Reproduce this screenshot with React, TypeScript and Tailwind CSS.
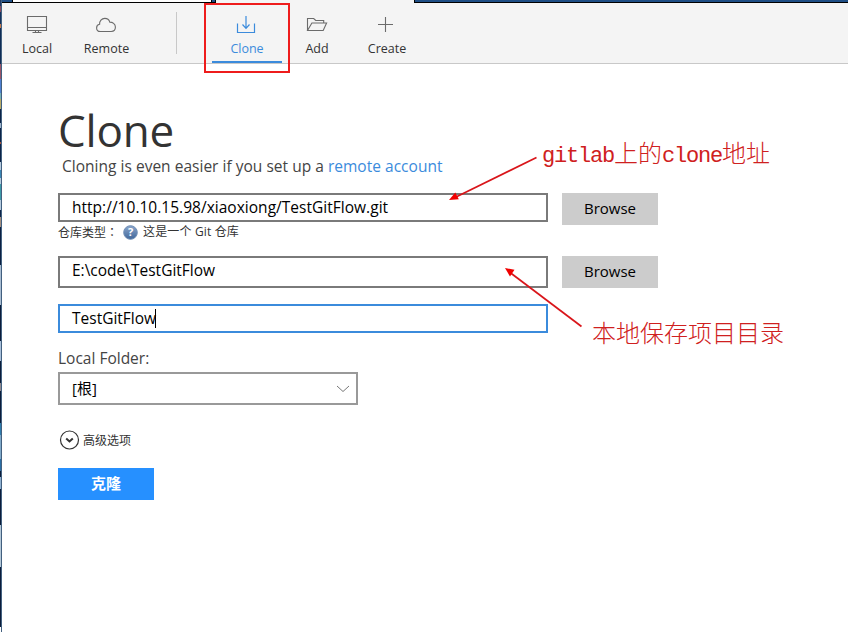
import React from 'react';

const stripe: [number, string][] = [
  [6, '#1d3a66'], [6, '#8a4a5c'], [12, '#12315c'], [4, '#c47a4e'], [36, '#0f2c55'],
  [15, '#9a5468'], [14, '#4f7fd0'], [6, '#76b0b8'], [10, '#b8ab68'], [14, '#0c2348'],
  [5, '#9db4cc'], [14, '#0c2348'], [2, '#a3543c'], [18, '#0c2348'], [8, '#b5cade'],
  [8, '#3a86b4'], [6, '#b5cade'], [16, '#3d9aa8'], [10, '#b5cade'], [7, '#0c2348'],
  [10, '#a48f80'], [38, '#0a1f42'], [40, '#a9bdd2'], [36, '#0a1c3a'], [20, '#a9c0da'],
  [22, '#0a1c3a'], [8, '#8f8a90'], [32, '#0a1c3a'], [12, '#2f7cac'], [24, '#7fa8c8'],
  [12, '#2b6ea4'], [6, '#0a1c3a'], [12, '#8fb0d0'], [36, '#0a1c3a'], [42, '#b4c8d8'],
  [60, '#0a1c3a'],
];

const iconProps = { fill: 'none', stroke: '#6b6b6b', strokeWidth: 1.1 };

function MonitorIcon() {
  return (
    <svg width="22" height="20" viewBox="0 0 22 20" {...iconProps}>
      <path d="M1.500 1.500h19v14h-19zM1.500 12.500h19M9.500 15.500v2M12.500 15.500v2M6.500 17.500h9" />
    </svg>
  );
}

function CloudIcon() {
  return (
    <svg className="-ml-[2px]" width="22" height="20" viewBox="0 0 22 20" {...iconProps}>
      <path d="M5.300 16.500C3 16.500 1.600 14.900 1.600 12.900c0-1.900 1.200-3.300 3-3.600C4.300 6 6.700 3.400 9.800 3.400c2.600 0 4.300 1.400 5 3.700 2.700 0 5.600 1.900 5.600 5 0 2.600-1.800 4.400-4.200 4.400z" />
    </svg>
  );
}

function CloneIcon() {
  return (
    <svg className="-ml-[2px]" width="20" height="20" viewBox="0 0 20 20" fill="none" stroke="#3b8bdc" strokeWidth="1.200">
      <path d="M1.500 8.500v9h17v-9" />
      <path d="M10 1v12M6.500 9.500l3.500 3.800 3.500-3.800" />
    </svg>
  );
}

function FolderIcon() {
  return (
    <svg width="22" height="20" viewBox="0 0 22 20" {...iconProps}>
      <path d="M1.500 15.500V3.500h6.200l2 2h8v2.500M1.500 15.500l4.400-7.500h14.700l-3.400 7.500z" />
    </svg>
  );
}

function PlusIcon() {
  return (
    <svg className="-ml-[4px]" width="20" height="20" viewBox="0 0 20 20" {...iconProps}>
      <path d="M10.500 2v15M3 9.500h15" />
    </svg>
  );
}

function Tab({ icon, label, className, active }: { icon: React.ReactNode; label: string; className: string; active?: boolean }) {
  return (
    <div className={`flex h-[60px] shrink-0 flex-col items-center pt-[12px] ${className} ${active ? 'border-b-2 border-[#3b8bdc] text-[#3b8bdc]' : 'text-[#333]'}`}>
      {icon}
      <span className="mt-[5px] whitespace-nowrap text-[12.500px] leading-[18px]">{label}</span>
    </div>
  );
}

function Browse() {
  return (
    <button className="h-8 w-24 shrink-0 bg-[#cccccc] pb-[3px] text-[15px] leading-5 text-black">Browse</button>
  );
}

export default function App() {
  return (
    <div className="relative flex h-[632px] w-[848px] overflow-hidden bg-white font-['Open_Sans','Noto_Sans_CJK_SC',sans-serif]">
      <div className="flex w-px shrink-0 flex-col overflow-hidden">
        {stripe.map(([height, color], i) => (
          <div key={i} className="w-px shrink-0" style={{ height, background: color }} />
        ))}
      </div>
      <div className="w-px shrink-0 bg-[#42607f]" />
      <div className="flex w-[846px] flex-col">
        <div className="flex h-[3px] shrink-0">
          <div className="w-[11px] border-r border-b border-black bg-[#1f4e85]" />
          <div className="w-[198px] border-b border-black bg-white" />
          <div className="w-[5px] border-x border-b border-black bg-[#1f4e85]" />
          <div className="w-[198px] bg-[#f4f4f4]" />
          <div className="flex-1 border-b border-l border-black bg-[#1f4e85]" />
        </div>
        <header className="flex h-[61px] shrink-0 border-b border-[#c8c8c8] bg-[#f4f4f4]">
          <Tab icon={<MonitorIcon />} label="Local" className="w-[70px]" />
          <Tab icon={<CloudIcon />} label="Remote" className="w-[69px]" />
          <div className="ml-[35px] mt-[9px] h-[42px] w-px shrink-0 bg-[#c8c8c8]" />
          <Tab icon={<CloneIcon />} label="Clone" className="ml-[35px] w-[70px]" active />
          <Tab icon={<FolderIcon />} label="Add" className="w-[70px]" />
          <Tab icon={<PlusIcon />} label="Create" className="w-[70px]" />
        </header>

        <main className="flex flex-col items-start pl-[56px] pt-[36px]">
          <h1 className="h-[56px] text-[44px] leading-[60px] tracking-[-0.200px] text-[#333]">Clone</h1>
          <p className="ml-1 whitespace-nowrap text-[15.500px] leading-5 tracking-[0.020px] text-[#444]">
            Cloning is even easier if you set up a <a className="text-[#3b8bdc]">remote account</a>
          </p>

          <div className="mt-[17px] flex h-8 gap-[14px]">
            <div className="h-[29px] w-[490px] border-2 border-[#7a7a7a] pl-3 text-[15.500px] leading-[25px] tracking-[0.020px] text-black">http://10.10.15.98/xiaoxiong/TestGitFlow.git</div>
            <Browse />
          </div>
          <div className="-mt-px flex h-4 items-center text-xs leading-4 text-[#333]">
            <span>仓库类型<span className="font-['Noto_Sans_CJK_TC',sans-serif]" lang="zh-TW">：</span></span>
            <svg className="ml-[5px]" width="15" height="15" viewBox="0 0 15 15">
              <defs>
                <linearGradient id="help" x1="0" y1="0" x2="0" y2="1">
                  <stop offset="0" stopColor="#8ba7cc" />
                  <stop offset="1" stopColor="#40669a" />
                </linearGradient>
              </defs>
              <circle cx="7.500" cy="7.500" r="6.800" fill="url(#help)" stroke="#6d8cb4" />
              <text x="7.500" y="11.300" textAnchor="middle" fontSize="11" fontWeight="700" fill="white">?</text>
            </svg>
            <span className="ml-[5px] tracking-[0.150px]">这是一个 Git 仓库</span>
          </div>

          <div className="mt-4 flex h-8 gap-[14px]">
            <div className="h-8 w-[490px] border-2 border-[#7a7a7a] pl-3 text-[15.500px] leading-[25px] text-black">E:\code\TestGitFlow</div>
            <Browse />
          </div>

          <div className="mt-4 flex h-[29px] w-[490px] items-center border-2 border-[#3b8bdc] pl-3 text-[15.500px] leading-[25px] text-black">
            TestGitFlow<span className="-ml-px h-[19px] w-px bg-black" />
          </div>

          <label className="mt-[15px] h-5 text-[15.500px] leading-5 text-[#444]">Local Folder:</label>
          <div className="mt-1 flex h-[33px] w-[300px] items-center justify-between border-2 border-[#999] pl-3 pr-[6px] text-[15px] text-black">
            <span>[根]</span>
            <svg width="14" height="8" viewBox="0 0 14 8" fill="none" stroke="#777"><path d="M1 1l6 5.500L13 1" /></svg>
          </div>

          <div className="mt-[25px] flex h-5 items-center pl-[1px] text-xs text-[#333]">
            <svg width="21" height="20" viewBox="0 0 21 20" fill="none" stroke="#333">
              <circle cx="10.500" cy="10" r="9" strokeWidth="1.200" />
              <path d="M7.200 8.500l3.300 3 3.300-3" strokeWidth="2" />
            </svg>
            <span className="ml-[3px] pt-[2px]">高级选项</span>
          </div>
          <button className="mt-[18px] h-8 w-24 bg-[#2690ff] text-[15px] font-bold leading-[30px] text-white">
            <span className="block h-8">克隆</span>
          </button>
        </main>
      </div>

      <div className="absolute left-[204px] top-[3px] h-[70px] w-[86px] border-2 border-[#ee1c1c]" />
      <svg className="absolute left-0 top-0" width="848" height="632" viewBox="0 0 848 632">
        <g stroke="#d9151a" strokeWidth="1.700" fill="#f00000">
          <path d="M536.500 157.500L455 197.500" />
          <path d="M449 200l6.300-7.500 3.500 6.700z" stroke="none" />
          <path d="M581.500 326.500L510 272.500" />
          <path d="M505 268l9.500 1.800-4.500 6.800z" stroke="none" />
        </g>
      </svg>
      <div className="absolute left-[542px] top-[135px] flex items-baseline whitespace-nowrap font-['Noto_Sans_CJK_SC',sans-serif] text-2xl font-light leading-[34px] text-[#cf2020]">
        <span className="font-['Liberation_Mono',monospace] text-[22px] font-normal tracking-[-1.200px]">gitlab</span>
        <span>上的</span>
        <span className="font-['Liberation_Mono',monospace] text-[22px] font-normal tracking-[-1.200px]">clone</span>
        <span>地址</span>
      </div>
      <div className="absolute left-[592px] top-[315px] whitespace-nowrap font-['Noto_Sans_CJK_SC',sans-serif] text-2xl font-light leading-[34px] text-[#cf2020]">本地保存项目目录</div>
    </div>
  );
}
